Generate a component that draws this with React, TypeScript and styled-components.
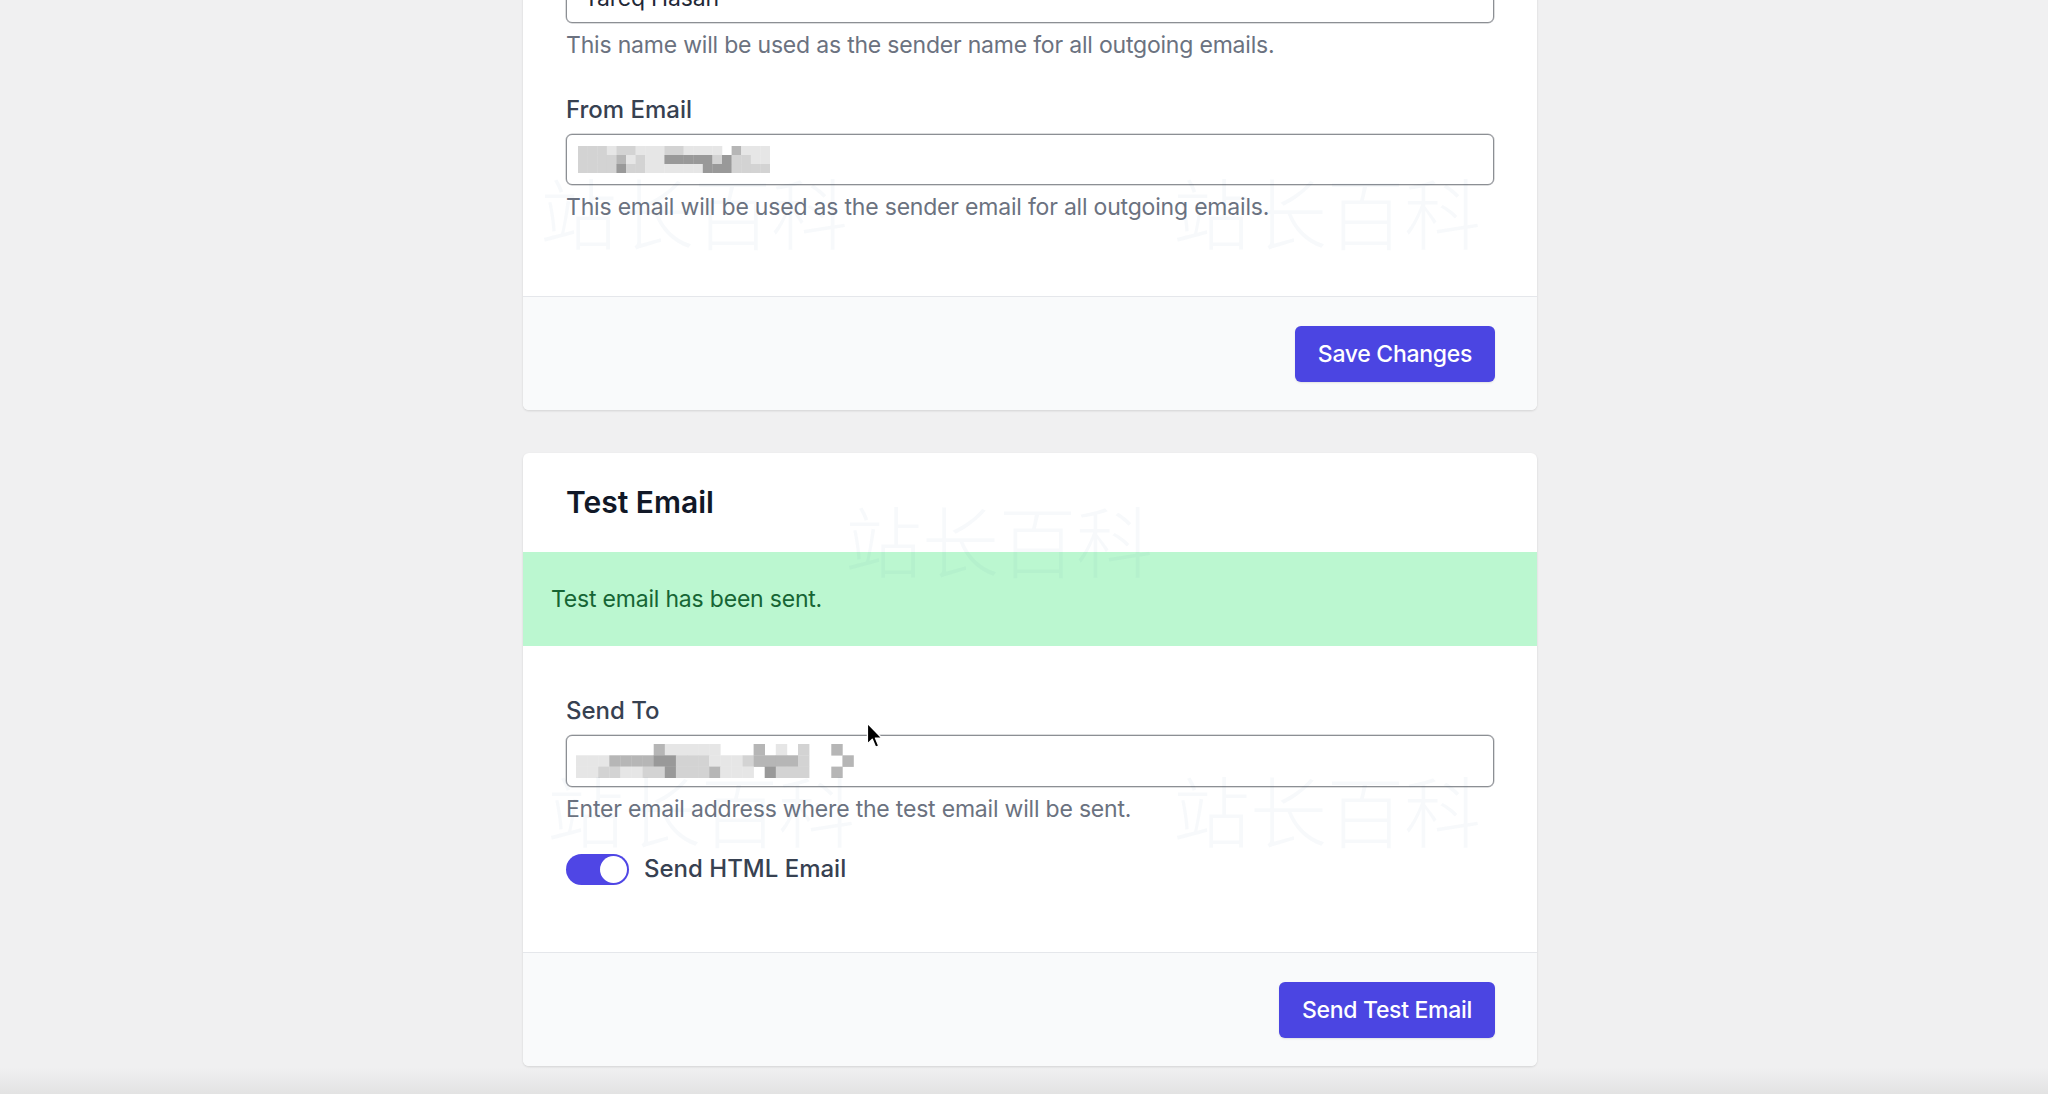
import styled, { createGlobalStyle } from 'styled-components'

const GlobalStyle = createGlobalStyle`
  html, body {
    margin: 0;
    padding: 0;
  }
  body {
    font-family: Inter, "Noto Sans", "Liberation Sans", sans-serif;
    -webkit-font-smoothing: antialiased;
  }
`

const Page = styled.div`
  position: relative;
  height: 100vh;
  overflow: hidden;
  display: flex;
  flex-direction: column;
  align-items: center;
  gap: 43px;
  padding-left: 12px;
  box-sizing: border-box;
  background: linear-gradient(to bottom, #f0f0f1 0, #f0f0f1 1068px, #e3e3e3 1094px);
`

const Card = styled.div<{ $offset?: number }>`
  width: 1014px;
  flex: none;
  margin-top: ${(p) => p.$offset ?? 0}px;
  background: #fff;
  border-radius: 6px;
  box-shadow: 0 1px 3px rgba(0, 0, 0, 0.08), 0 1px 2px rgba(0, 0, 0, 0.05);
  overflow: hidden;
`

const CardHeader = styled.div`
  padding: 30px 43px;
`

const Title = styled.h2`
  margin: 0;
  font-size: 30px;
  line-height: 39px;
  font-weight: 600;
  color: #111827;
`

const Notice = styled.div`
  padding: 29px 28px;
  background: #bbf7d0;
  color: #166534;
  font-size: 23px;
  letter-spacing: -0.2px;
  line-height: 36px;
`

const CardBody = styled.div<{ $top: number; $bottom: number }>`
  padding: ${(p) => p.$top}px 43px ${(p) => p.$bottom}px;
  display: flex;
  flex-direction: column;
`

const Field = styled.div<{ $gap?: number }>`
  display: flex;
  flex-direction: column;
  margin-top: ${(p) => p.$gap ?? 0}px;
`

const Label = styled.label`
  font-size: 24px;
  line-height: 36px;
  font-weight: 500;
  color: #374151;
  margin-bottom: 6px;
`

const InputShell = styled.div<{ $pad: number; $h: number }>`
  height: ${(p) => p.$h}px;
  box-sizing: border-box;
  display: flex;
  align-items: center;
  padding: 0 ${(p) => p.$pad}px;
  border: 1px solid #8c8f94;
  border-radius: 6px;
  box-shadow: 0 0 0 0.5px rgba(140, 143, 148, 0.6);
  background: #fff;
  font-size: 23px;
  letter-spacing: -0.2px;
  color: #1f2937;
`

const Help = styled.p`
  margin: 4px 0 0;
  font-size: 23px;
  letter-spacing: -0.2px;
  line-height: 36px;
  color: #6b7280;
`

const ToggleRow = styled.div`
  display: flex;
  align-items: center;
  gap: 15px;
  margin-top: 24px;
  height: 36px;
`

const Track = styled.span<{ $on: boolean }>`
  position: relative;
  width: 63px;
  height: 31px;
  border-radius: 16px;
  background: ${(p) => (p.$on ? '#4f46e5' : '#d1d5db')};
  flex: none;
`

const Knob = styled.span<{ $on: boolean }>`
  position: absolute;
  top: 2px;
  left: ${(p) => (p.$on ? 34 : 2)}px;
  width: 27px;
  height: 27px;
  border-radius: 50%;
  background: #fff;
`

const ToggleText = styled.span`
  font-size: 24px;
  line-height: 36px;
  font-weight: 500;
  color: #374151;
`

const CardFooter = styled.div`
  display: flex;
  justify-content: flex-end;
  padding: 29px 42px 28px;
  background: #f9fafb;
  border-top: 1px solid #e5e7eb;
`

const Button = styled.button`
  height: 56px;
  padding: 0 23px;
  border: none;
  border-radius: 6px;
  background: #4b45e2;
  color: #fff;
  font-family: inherit;
  font-size: 23px;
  letter-spacing: -0.3px;
  font-weight: 500;
  box-shadow: 0 1px 2px rgba(0, 0, 0, 0.1);
`

const Watermark = styled.div<{ $x: number; $y: number }>`
  position: absolute;
  left: ${(p) => p.$x}px;
  top: ${(p) => p.$y}px;
  font-family: "Noto Sans CJK SC", sans-serif;
  font-weight: 300;
  font-size: 77px;
  line-height: 77px;
  white-space: nowrap;
  color: rgba(60, 100, 160, 0.04);
  pointer-events: none;
`

const Cursor = styled.svg`
  position: absolute;
  left: 866px;
  top: 722px;
  pointer-events: none;
`

const shades: Record<string, string> = {
  '1': '#e6e6e6',
  '2': '#d3d3d3',
  '3': '#b6b6b6',
  '4': '#999999',
}

const Mosaic = ({ rows, cw, ch }: { rows: string[]; cw: number; ch: number }) => {
  const w = rows[0].length * cw
  const h = rows.length * ch
  return (
    <svg width={w} height={h} style={{ display: 'block', filter: 'blur(0.6px)' }}>
      {rows.map((r, y) =>
        r.split('').map((c, x) =>
          shades[c] ? (
            <rect key={`${x}-${y}`} x={x * cw} y={y * ch} width={cw + 0.3} height={ch + 0.3} fill={shades[c]} />
          ) : null
        )
      )}
    </svg>
  )
}

const fromEmailRows = ['222122111221111.3111', '22223121144444242211', '22224221111114442222']
const sendToRows = ['.......311111...3.1.2..3.', '111333344222111233332...3', '1122112242223111.4222..3.']

const App = () => {
  return (
    <Page>
      <GlobalStyle />
      <Card $offset={-113}>
        <CardBody $top={43} $bottom={71}>
          <Field>
            <Label>From Name</Label>
            <InputShell $pad={17} $h={51}>Tareq Hasan</InputShell>
            <Help>This name will be used as the sender name for all outgoing emails.</Help>
          </Field>
          <Field $gap={29}>
            <Label>From Email</Label>
            <InputShell $pad={11} $h={51}>
              <Mosaic rows={fromEmailRows} cw={9.6} ch={9} />
            </InputShell>
            <Help>This email will be used as the sender email for all outgoing emails.</Help>
          </Field>
        </CardBody>
        <CardFooter>
          <Button>Save Changes</Button>
        </CardFooter>
      </Card>

      <Card>
        <CardHeader>
          <Title>Test Email</Title>
        </CardHeader>
        <Notice>Test email has been sent.</Notice>
        <CardBody $top={47} $bottom={65}>
          <Field>
            <Label>Send To</Label>
            <InputShell $pad={9} $h={52}>
              <Mosaic rows={sendToRows} cw={11.1} ch={11.3} />
            </InputShell>
            <Help>Enter email address where the test email will be sent.</Help>
          </Field>
          <ToggleRow>
            <Track $on>
              <Knob $on />
            </Track>
            <ToggleText>Send HTML Email</ToggleText>
          </ToggleRow>
        </CardBody>
        <CardFooter>
          <Button>Send Test Email</Button>
        </CardFooter>
      </Card>

      <Watermark $x={540} $y={172}>站长百科</Watermark>
      <Watermark $x={1173} $y={172}>站长百科</Watermark>
      <Watermark $x={845} $y={500}>站长百科</Watermark>
      <Watermark $x={547} $y={770}>站长百科</Watermark>
      <Watermark $x={1173} $y={770}>站长百科</Watermark>

      <Cursor width="17" height="27" viewBox="0 0 13 21">
        <path d="M1 1 L1 17 L4.8 13.4 L7.4 19.6 L9.8 18.6 L7.2 12.5 L12.2 12.5 Z" fill="#000" stroke="#fff" strokeWidth="1" strokeLinejoin="round" />
      </Cursor>
    </Page>
  )
}

export default App
